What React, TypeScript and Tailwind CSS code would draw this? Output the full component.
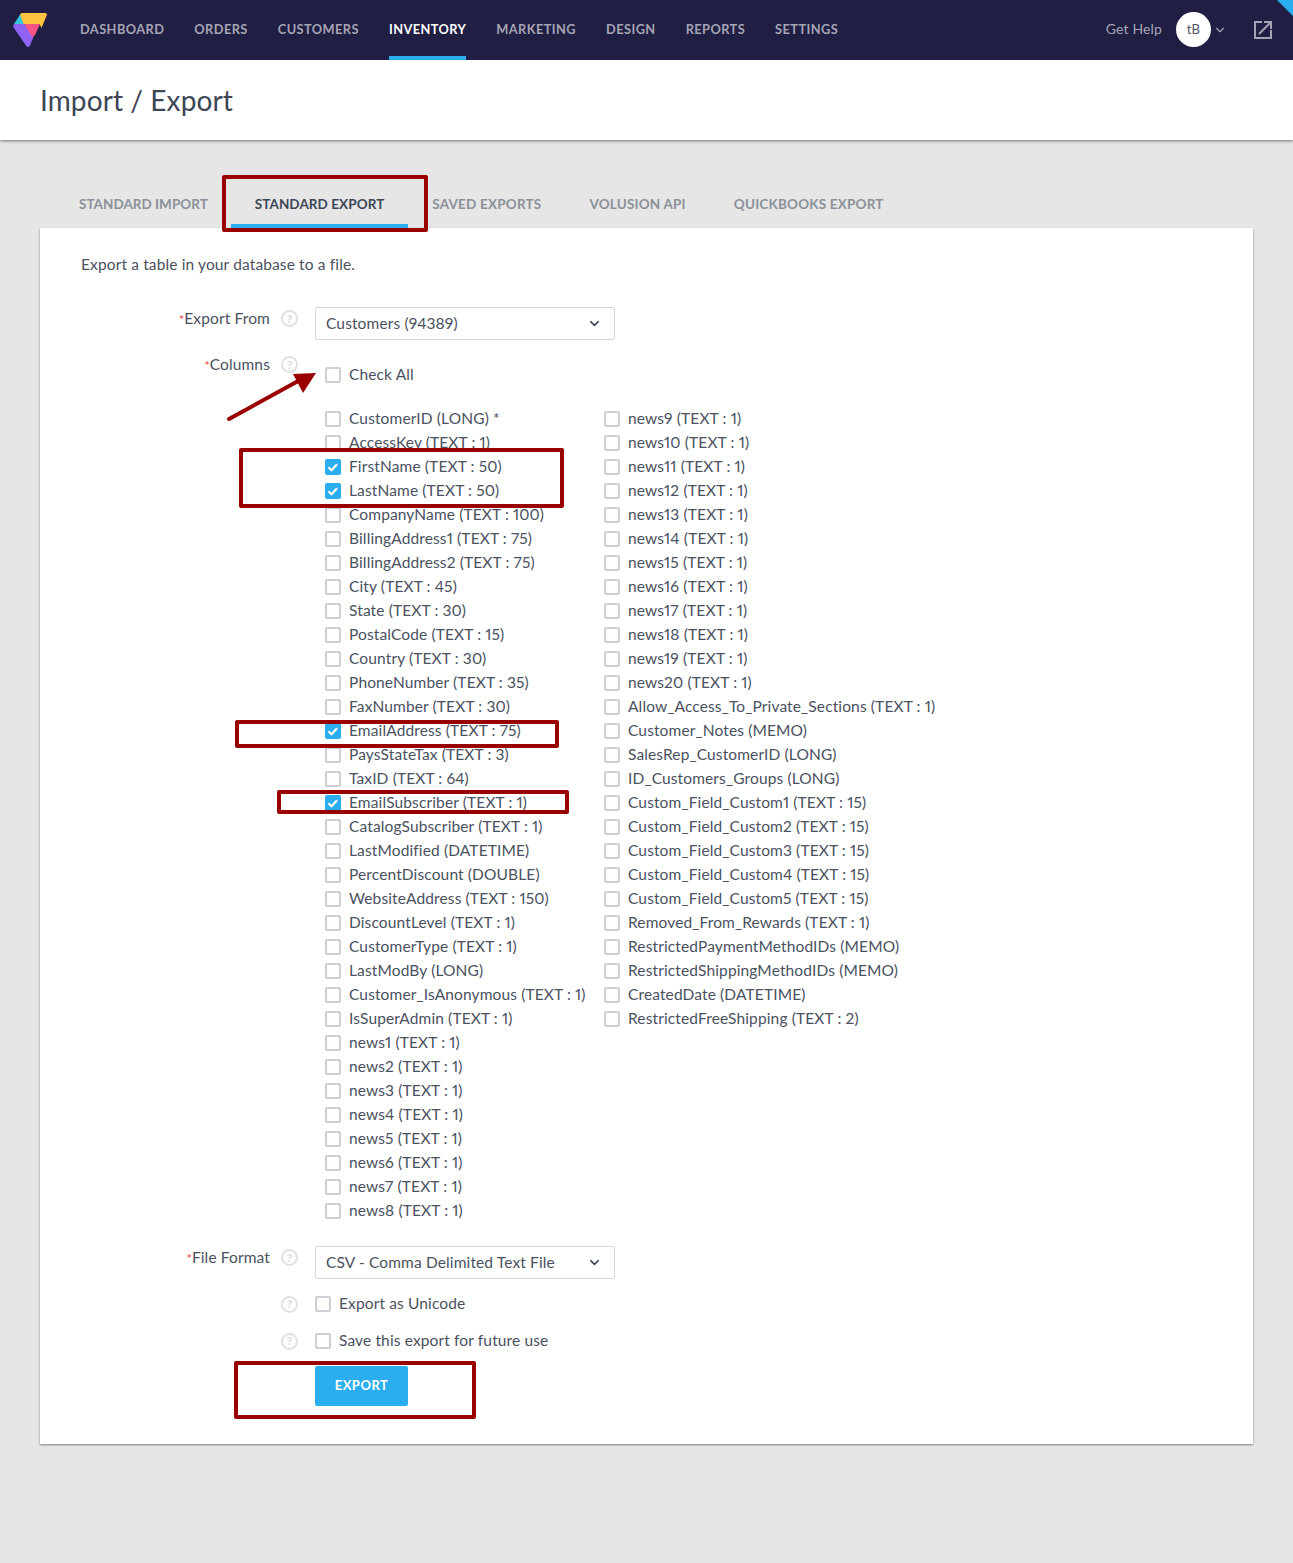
import React from "react";
import { ChevronDown } from "lucide-react";

const left: [string, boolean?][] = [
  ["CustomerID (LONG) *"], ["AccessKey (TEXT : 1)"], ["FirstName (TEXT : 50)", true], ["LastName (TEXT : 50)", true],
  ["CompanyName (TEXT : 100)"], ["BillingAddress1 (TEXT : 75)"], ["BillingAddress2 (TEXT : 75)"], ["City (TEXT : 45)"],
  ["State (TEXT : 30)"], ["PostalCode (TEXT : 15)"], ["Country (TEXT : 30)"], ["PhoneNumber (TEXT : 35)"],
  ["FaxNumber (TEXT : 30)"], ["EmailAddress (TEXT : 75)", true], ["PaysStateTax (TEXT : 3)"], ["TaxID (TEXT : 64)"],
  ["EmailSubscriber (TEXT : 1)", true], ["CatalogSubscriber (TEXT : 1)"], ["LastModified (DATETIME)"], ["PercentDiscount (DOUBLE)"],
  ["WebsiteAddress (TEXT : 150)"], ["DiscountLevel (TEXT : 1)"], ["CustomerType (TEXT : 1)"], ["LastModBy (LONG)"],
  ["Customer_IsAnonymous (TEXT : 1)"], ["IsSuperAdmin (TEXT : 1)"], ["news1 (TEXT : 1)"], ["news2 (TEXT : 1)"],
  ["news3 (TEXT : 1)"], ["news4 (TEXT : 1)"], ["news5 (TEXT : 1)"], ["news6 (TEXT : 1)"], ["news7 (TEXT : 1)"], ["news8 (TEXT : 1)"],
];
const right: string[] = [
  "news9 (TEXT : 1)", "news10 (TEXT : 1)", "news11 (TEXT : 1)", "news12 (TEXT : 1)", "news13 (TEXT : 1)", "news14 (TEXT : 1)",
  "news15 (TEXT : 1)", "news16 (TEXT : 1)", "news17 (TEXT : 1)", "news18 (TEXT : 1)", "news19 (TEXT : 1)", "news20 (TEXT : 1)",
  "Allow_Access_To_Private_Sections (TEXT : 1)", "Customer_Notes (MEMO)", "SalesRep_CustomerID (LONG)", "ID_Customers_Groups (LONG)",
  "Custom_Field_Custom1 (TEXT : 15)", "Custom_Field_Custom2 (TEXT : 15)", "Custom_Field_Custom3 (TEXT : 15)", "Custom_Field_Custom4 (TEXT : 15)",
  "Custom_Field_Custom5 (TEXT : 15)", "Removed_From_Rewards (TEXT : 1)", "RestrictedPaymentMethodIDs (MEMO)", "RestrictedShippingMethodIDs (MEMO)",
  "CreatedDate (DATETIME)", "RestrictedFreeShipping (TEXT : 2)",
];
const nav = ["DASHBOARD", "ORDERS", "CUSTOMERS", "INVENTORY", "MARKETING", "DESIGN", "REPORTS", "SETTINGS"];
const tabs = ["STANDARD IMPORT", "STANDARD EXPORT", "SAVED EXPORTS", "VOLUSION API", "QUICKBOOKS EXPORT"];

function Box({ checked }: { checked?: boolean }) {
  return checked ? (
    <span className="flex h-4 w-4 shrink-0 items-center justify-center rounded-[2px] bg-[#2aaeef]">
      <svg viewBox="0 0 16 16" className="h-4 w-4" fill="none" stroke="#fff" strokeWidth="2.2">
        <path d="M3.5 8.3l3 2.9 5.6-6" />
      </svg>
    </span>
  ) : (
    <span className="h-4 w-4 shrink-0 rounded-[2px] border-2 border-[#cdd0d4] bg-white" />
  );
}

function Row({ label, checked }: { label: string; checked?: boolean }) {
  return (
    <div className="flex h-6 items-center gap-2 whitespace-nowrap">
      <Box checked={checked} />
      <span>{label}</span>
    </div>
  );
}

function Help() {
  return (
    <span className="flex h-[17px] w-[17px] shrink-0 items-center justify-center rounded-full border-2 border-[#dfe1e3] text-[12px] font-bold leading-none text-[#d5d7da]">
      ?
    </span>
  );
}

function Label({ text }: { text?: string }) {
  return (
    <div className="flex w-[258px] shrink-0 items-center justify-end gap-[11px]">
      {text && (
        <span className="whitespace-nowrap">
          <span className="text-[12px] font-bold text-[#ee5a5a]">*</span>
          {text}
        </span>
      )}
      <Help />
    </div>
  );
}

function Select({ value }: { value: string }) {
  return (
    <div className="flex h-[33px] w-[300px] items-center justify-between rounded-[2px] border border-[#d5d8dc] bg-white pl-[10px] pr-[12px]">
      <span>{value}</span>
      <ChevronDown size={15} strokeWidth={2.4} className="text-[#3c4352]" />
    </div>
  );
}

function Mark({ className }: { className: string }) {
  return <div className={`pointer-events-none absolute rounded-[2px] border-4 border-[#990000] ${className}`} />;
}

export default function App() {
  return (
    <div className="relative h-[1563px] overflow-hidden bg-[#e6e6e6] font-['Lato','Liberation_Sans',sans-serif] text-[15.5px] tracking-[0.13px] text-[#4a5160] proportional-nums">
      <header className="relative flex h-[60px] items-stretch bg-[#201e42]">
        <svg viewBox="0 0 36 38" className="absolute left-[12px] top-[12px] h-[38px] w-[36px]">
          <path d="M2 12L8.5 2 12 12z" fill="#35c5dd" />
          <path d="M8 2.5Q8.7 1 10 1H33Q35.6 1 34.7 3.5L29.5 16 27.5 12H11.5z" fill="#fec340" />
          <path d="M2.5 12H12.5L21.5 25 18 33.5Q16.5 36.5 14 33.5L1.5 15.5Q.5 13 2.5 12z" fill="#8e62f2" />
          <path d="M12.5 12H28L23 23Q21 26 19 23.5z" fill="#f85486" />
        </svg>
        <nav className="ml-[80px] flex gap-[30px] text-[12.8px] font-bold tracking-[0.42px] text-[#a5a4b5]">
          {nav.map((n) => (
            <div
              key={n}
              className={`flex h-[60px] items-center border-b-4 pt-1 ${n === "INVENTORY" ? "border-[#2aaeef] text-white" : "border-transparent"}`}
            >
              {n}
            </div>
          ))}
        </nav>
        <div className="ml-auto flex items-center pb-[1px] pr-[19px] text-[#a5a4b5]">
          <span className="pb-[2px] text-[14px]">Get Help</span>
          <span className="ml-[14px] flex h-[35px] w-[35px] items-center justify-center rounded-full bg-white text-[13px] text-[#4a5160]">tB</span>
          <ChevronDown size={14} strokeWidth={2} className="ml-[2px]" />
          <svg viewBox="0 0 22 22" fill="none" stroke="currentColor" strokeWidth="2" className="ml-[25px] h-[22px] w-[22px]">
            <path d="M10 3H3v16h16v-8" />
            <path d="M7 15L19 3M12 3h7v7" />
          </svg>
        </div>
        <div className="absolute right-0 top-0 h-0 w-0 border-l-[16px] border-t-[16px] border-l-transparent border-t-[#2aaeef]" />
      </header>
      <div className="flex h-[80px] items-center bg-white pl-[40px] text-[28px] tracking-[0.1px] text-[#3c4656] shadow-[0_1px_3px_rgba(0,0,0,0.5)]">
        Import / Export
      </div>
      <div className="mt-[36px] flex h-[52px] items-stretch pl-[79px] text-[13.5px] font-bold tracking-[0.02px] text-[#8c9099]">
        {tabs.map((t, i) => (
          <div
            key={t}
            className={`flex items-center border-b-4 pt-[8px] ${
              i === 1
                ? "ml-[23px] mr-[24px] border-[#2aaeef] px-[24px] tracking-[0.07px] text-[#3c4656]"
                : i === 0
                ? "border-transparent"
                : "mr-[48px] border-transparent tracking-[0.2px]"
            }`}
          >
            {t}
          </div>
        ))}
      </div>
      <main className="mx-[40px] h-[1216px] bg-white pt-[25px] shadow-[0_1px_2px_rgba(0,0,0,0.45)]">
        <p className="ml-[41px] leading-[22px]">Export a table in your database to a file.</p>
        <div className="mt-[32px] flex">
          <div className="flex h-[33px] items-start"><Label text="Export From" /></div>
          <div className="ml-[17px]"><Select value="Customers (94389)" /></div>
        </div>
        <div className="mt-[13px] flex">
          <div className="h-6"><Label text="Columns" /></div>
          <div className="ml-[27px] pt-[10px]">
            <Row label="Check All" />
            <div className="mt-[20px] flex">
              <div className="w-[279px]">{left.map(([l, c]) => <Row key={l} label={l} checked={c} />)}</div>
              <div>{right.map((l) => <Row key={l} label={l} />)}</div>
            </div>
          </div>
        </div>
        <div className="mt-[23px] flex">
          <div className="flex h-[33px] items-start"><Label text="File Format" /></div>
          <div className="ml-[17px]"><Select value="CSV - Comma Delimited Text File" /></div>
        </div>
        <div className="mt-[13px] flex h-6 items-center">
          <Label />
          <div className="ml-[17px]"><Row label="Export as Unicode" /></div>
        </div>
        <div className="mt-[13px] flex h-6 items-center">
          <Label />
          <div className="ml-[17px]"><Row label="Save this export for future use" /></div>
        </div>
        <button className="ml-[275px] mt-[13px] flex h-[40px] w-[93px] items-center justify-center rounded-[2px] bg-[#2aaeef] text-[13px] font-bold tracking-[0.5px] text-white">
          EXPORT
        </button>
      </main>
      <Mark className="left-[222px] top-[175px] h-[57px] w-[206px]" />
      <Mark className="left-[239px] top-[448px] h-[60px] w-[325px]" />
      <Mark className="left-[235px] top-[720px] h-[28px] w-[324px]" />
      <Mark className="left-[277px] top-[790px] h-[24px] w-[292px]" />
      <Mark className="left-[234px] top-[1361px] h-[58px] w-[242px]" />
      <svg className="pointer-events-none absolute left-[220px] top-[365px] h-[60px] w-[100px]" viewBox="0 0 100 60">
        <path d="M9 54L80 15" stroke="#990000" strokeWidth="4" strokeLinecap="round" />
        <path d="M96 8L73 9l10 19z" fill="#990000" />
      </svg>
    </div>
  );
}
